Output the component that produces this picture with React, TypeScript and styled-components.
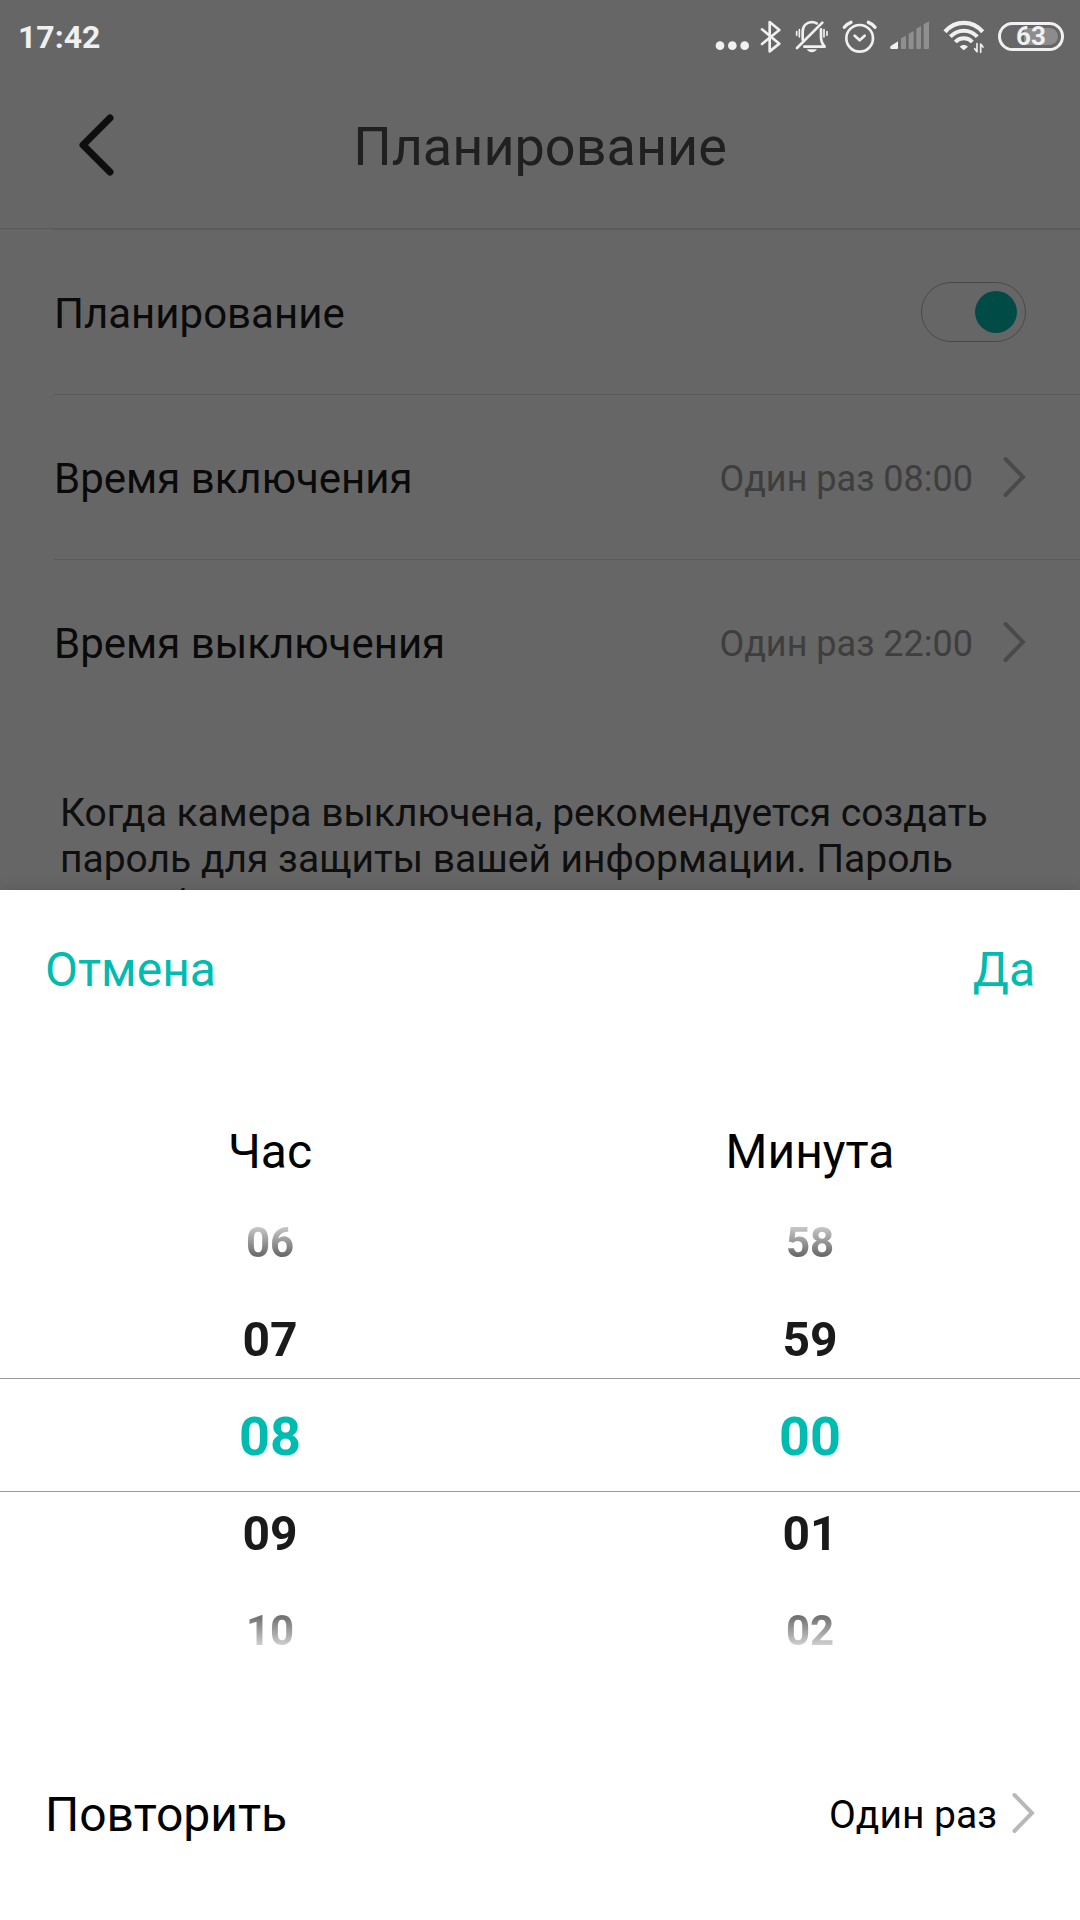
import React, { useState } from 'react';
import styled, { createGlobalStyle, css } from 'styled-components';

const teal = '#00bbaf';

const GlobalStyle = createGlobalStyle`
  *, *::before, *::after { box-sizing: border-box; }
  body { margin: 0; background: #fff; }
  body, button, input { font-family: Roboto, "Noto Sans", sans-serif; }
  button {
    margin: 0;
    padding: 0;
    border: 0;
    background: none;
    color: inherit;
    text-align: left;
    cursor: pointer;
  }
`;

const Screen = styled.div`
  position: relative;
  display: flex;
  flex-direction: column;
  height: 100vh;
  overflow: hidden;
  background: #fff;
`;

const StatusBar = styled.div`
  position: relative;
  z-index: 2;
  display: flex;
  align-items: center;
  justify-content: space-between;
  flex: none;
  height: 63px;
  padding: 0 16px 0 18px;
  color: #f0f0f0;
`;

const Clock = styled.time`
  padding-top: 11px;
  font-size: 32px;
  line-height: 38px;
  font-weight: 700;
`;

const StatusIcons = styled.div`
  display: flex;
  align-items: center;
  gap: 12px;
  padding-top: 9px;
`;

const Glyph = styled.svg`
  display: block;
  height: 34px;
  overflow: visible;
  fill: none;
  stroke: currentColor;
  stroke-width: 8;
  stroke-linecap: round;
  stroke-linejoin: round;
`;

const Battery = styled.div`
  position: relative;
  display: flex;
  align-items: center;
  justify-content: center;
  width: 66px;
  height: 29px;
  border: 3px solid currentColor;
  border-radius: 15px;
  font-size: 26px;
  line-height: 28px;
  font-weight: 700;

  &::before {
    content: '';
    position: absolute;
    right: 3px;
    top: 3px;
    bottom: 3px;
    width: 34px;
    border-radius: 0 9px 9px 0;
    background: #8c8c8c;
  }

  span { position: relative; }
`;

const Header = styled.header`
  display: grid;
  grid-template-columns: 1fr auto 1fr;
  align-items: center;
  flex: none;
  height: 166px;
  border-bottom: 1px solid #e2e2e2;
  color: #505050;
`;

const BackButton = styled.button`
  justify-self: start;
  padding-left: 76px;
  color: #242424;
`;

const Title = styled.h1`
  margin: 0;
  padding-top: 2px;
  font-size: 54px;
  line-height: 64px;
  font-weight: 400;
`;

const Icon = styled.svg`
  display: block;
  flex: none;
  fill: none;
  stroke: currentColor;
  stroke-linecap: round;
  stroke-linejoin: miter;
`;

const Settings = styled.main`
  flex: none;
`;

const List = styled.div`
  margin-left: 54px;
`;

const rowStyle = css`
  display: flex;
  align-items: center;
  width: 100%;
  height: 165px;
  padding-right: 54px;
  border-top: 1px solid #e2e2e2;
  color: #1a1a1a;
  font-size: 42px;
  line-height: 50px;
`;

const SwitchRow = styled.label`
  ${rowStyle}
`;

const LinkRow = styled.button`
  && {
    ${rowStyle}
  }
`;

const RowLabel = styled.span`
  flex: 1;
  padding-top: 4px;
`;

const RowValue = styled.span`
  margin-right: 30px;
  padding-top: 4px;
  color: #9c9c9c;
  font-size: 36px;
  line-height: 42px;
`;

const ArrowTint = styled.span`
  color: #b8b8b8;
`;

const Switch = styled.input`
  appearance: none;
  display: flex;
  align-items: center;
  width: 105px;
  height: 60px;
  margin: 0;
  padding: 0 8px;
  border: 1px solid #b4b4b4;
  border-radius: 30px;

  &::before {
    content: '';
    width: 42px;
    height: 42px;
    border-radius: 50%;
    background: #b4b4b4;
  }

  &:checked { justify-content: flex-end; }
  &:checked::before { background: ${teal}; }
`;

const Hint = styled.p`
  margin: 0;
  padding: 66px 60px 0;
  color: #262626;
  font-size: 39px;
  line-height: 46px;
`;

const Scrim = styled.div`
  position: absolute;
  inset: 0;
  z-index: 1;
  background: rgba(0, 0, 0, 0.6);
`;

const Sheet = styled.section`
  position: absolute;
  left: 0;
  right: 0;
  bottom: 0;
  z-index: 3;
  padding: 52px 0 77px;
  background: #fff;
  color: #000;
  box-shadow: 0 0 16px rgba(0, 0, 0, 0.16);
`;

const Actions = styled.div`
  display: flex;
  justify-content: space-between;
  padding: 0 45px;
`;

const ActionButton = styled.button`
  && { color: ${teal}; }
  font-size: 48px;
  line-height: 56px;
`;

const Headings = styled.div`
  display: grid;
  grid-template-columns: 1fr 1fr;
  margin-top: 126px;
  text-align: center;
  font-size: 48px;
  line-height: 56px;
`;

const Wheels = styled.div`
  position: relative;
  display: grid;
  grid-template-columns: 1fr 1fr;
  margin-top: 30px;

  &::after {
    content: '';
    position: absolute;
    left: 0;
    right: 0;
    top: calc(50% - 57px);
    height: 114px;
    border: solid #9a9a9a;
    border-width: 1px 0;
    pointer-events: none;
  }
`;

const WheelBox = styled.div`
  display: flex;
  flex-direction: column;
  justify-content: center;
  height: 450px;
  overflow: hidden;
  mask-image: linear-gradient(transparent, #000 70px, #000 380px, transparent);
`;

const sizes = [54, 48, 42];

const WheelItem = styled.button<{ $distance: number }>`
  && {
    flex: none;
    height: 97px;
    padding-top: 2px;
    text-align: center;
    color: ${(p) => (p.$distance === 0 ? teal : '#1a1a1a')};
  }
  font-size: ${(p) => sizes[p.$distance]}px;
  font-weight: 700;
`;

const RepeatRow = styled.button`
  && {
    display: flex;
    align-items: center;
    width: 100%;
    margin-top: 123px;
    padding: 0 45px;
  }
  font-size: 48px;
  line-height: 56px;
`;

const RepeatValue = styled.span`
  margin-right: 15px;
  padding-top: 4px;
  font-size: 39px;
  line-height: 46px;
`;

function Arrow() {
  return (
    <ArrowTint>
      <Icon width="23" height="42" viewBox="0 0 23 42" strokeWidth="4">
        <path d="M2.500 3 L20 21 L2.500 39" />
      </Icon>
    </ArrowTint>
  );
}

function StatusGlyphs() {
  return (
    <StatusIcons>
      <Glyph width="36" viewBox="36 57 108 102">
        <g fill="currentColor" stroke="none">
          <circle cx="60" cy="137" r="13" />
          <circle cx="97" cy="137" r="13" />
          <circle cx="134" cy="137" r="13" />
        </g>
      </Glyph>
      <Glyph width="23" viewBox="180 57 69 102">
        <path d="M186 88 L238 131 L209 154 V66 L238 90 L186 132" />
      </Glyph>
      <Glyph width="35" viewBox="285 57 105 102">
        <path d="M291 144 L367 68" />
        <path d="M308 119 V96 C308 78 319 67 335 66 C341 66 346 67 350 70" />
        <path d="M363 88 V112 C363 124 367 132 374 140 H313" />
        <path d="M320 148 H351 C347 154 342 157 335.500 157 C329 157 324 154 320 148 Z" fill="currentColor" stroke="none" />
        <path d="M290 95 V106 M298 89 V111 M372 89 V111 M381 95 V106" strokeWidth="5" />
      </Glyph>
      <Glyph width="36" viewBox="426 57 108 102">
        <circle cx="479" cy="115" r="40" />
        <path d="M464 107 L479 121 L494 107" />
        <path d="M433 82 C438 75 445 70 453 67 M505 67 C513 70 520 75 525 82" strokeWidth="10" />
      </Glyph>
      <Glyph width="41" viewBox="570 57 123 102">
        <g stroke="none" fill="#8f8f8f">
          <path d="M603 115 L618 107 V144 Q618 147 615 147 H606 Q603 147 603 144 Z" />
          <path d="M626 101 L641 93 V144 Q641 147 638 147 H629 Q626 147 626 144 Z" />
          <path d="M649 86 L663 78 V144 Q663 147 660 147 H652 Q649 147 649 144 Z" />
          <path d="M671 73 L687 64 V144 Q687 147 684 147 H674 Q671 147 671 144 Z" />
          <path d="M571 139 L594 124 V144 Q594 147 591 147 H574 Q571 147 571 144 Z" fill="currentColor" />
        </g>
      </Glyph>
      <Glyph width="43" viewBox="729 57 129 102">
        <path d="M735 95 C767 60 816 60 848 95" strokeWidth="13" strokeLinecap="butt" />
        <path d="M751 110 C774 86 809 86 832 110" strokeWidth="12" strokeLinecap="butt" />
        <path d="M766 126 C780 111 803 111 817 126" strokeWidth="12" strokeLinecap="butt" />
        <path d="M779 140 C786 133 797 133 804 140 L791.500 151 Z" fill="currentColor" stroke="none" />
        <path d="M831 131 V155 L824 146 M842 157 V132 L849 141" strokeWidth="5" />
      </Glyph>
      <Battery>
        <span>63</span>
      </Battery>
    </StatusIcons>
  );
}

const pad = (n: number) => String(n).padStart(2, '0');

interface WheelProps {
  label: string;
  count: number;
  value: number;
  onChange: (value: number) => void;
}

function Wheel({ label, count, value, onChange }: WheelProps) {
  return (
    <WheelBox role="group" aria-label={label}>
      {[-2, -1, 0, 1, 2].map((step) => {
        const n = (value + step + count) % count;
        return (
          <WheelItem key={step} type="button" $distance={Math.abs(step)} onClick={() => onChange(n)}>
            {pad(n)}
          </WheelItem>
        );
      })}
    </WheelBox>
  );
}

export default function App() {
  const [enabled, setEnabled] = useState(true);
  const [hour, setHour] = useState(8);
  const [minute, setMinute] = useState(0);

  return (
    <>
      <GlobalStyle />
      <Screen>
        <StatusBar>
          <Clock>17:42</Clock>
          <StatusGlyphs />
        </StatusBar>
        <Header>
          <BackButton type="button" aria-label="Назад">
            <Icon width="40" height="64" viewBox="0 0 40 64" strokeWidth="7">
              <path d="M34 4 L7 31 L34 58" strokeLinejoin="round" />
            </Icon>
          </BackButton>
          <Title>Планирование</Title>
        </Header>
        <Settings>
          <List>
            <SwitchRow>
              <RowLabel>Планирование</RowLabel>
              <Switch type="checkbox" checked={enabled} onChange={(e) => setEnabled(e.target.checked)} />
            </SwitchRow>
            <LinkRow type="button">
              <RowLabel>Время включения</RowLabel>
              <RowValue>Один раз 08:00</RowValue>
              <Arrow />
            </LinkRow>
            <LinkRow type="button">
              <RowLabel>Время выключения</RowLabel>
              <RowValue>Один раз 22:00</RowValue>
              <Arrow />
            </LinkRow>
          </List>
          <Hint>
            Когда камера выключена, рекомендуется создать пароль для защиты вашей информации. Пароль потребуется
          </Hint>
        </Settings>
        <Scrim />
        <Sheet role="dialog" aria-label="Время включения">
          <Actions>
            <ActionButton type="button">Отмена</ActionButton>
            <ActionButton type="button">Да</ActionButton>
          </Actions>
          <Headings>
            <span>Час</span>
            <span>Минута</span>
          </Headings>
          <Wheels>
            <Wheel label="Час" count={24} value={hour} onChange={setHour} />
            <Wheel label="Минута" count={60} value={minute} onChange={setMinute} />
          </Wheels>
          <RepeatRow type="button">
            <RowLabel>Повторить</RowLabel>
            <RepeatValue>Один раз</RepeatValue>
            <Arrow />
          </RepeatRow>
        </Sheet>
      </Screen>
    </>
  );
}
